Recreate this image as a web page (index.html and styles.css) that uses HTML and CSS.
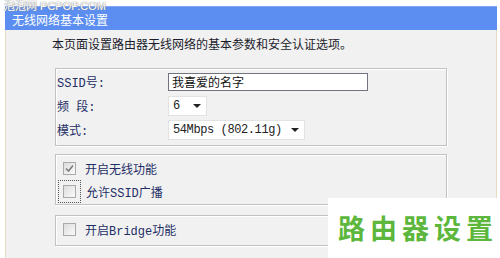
FILE: index.html
```html
<!DOCTYPE html>
<html lang="zh-CN">
<head>
    <meta charset="UTF-8">
    <title>无线网络基本设置</title>
    <link rel="stylesheet" href="styles.css">
</head>
<body>
    <!-- Site watermark over the top-left corner -->
    <div class="watermark">泡泡网 PCPOP.COM</div>

    <div class="page">
        <div class="title-bar"><span class="title-text">无线网络基本设置</span></div>

        <div class="panel">
            <p class="desc">本页面设置路由器无线网络的基本参数和安全认证选项。</p>

            <!-- Basic parameters -->
            <div class="group params">
                <div class="row">
                    <span class="label">SSID号:</span>
                    <span class="text-input">我喜爱的名字</span>
                </div>
                <div class="row">
                    <span class="label">频 段:</span>
                    <span class="select select-channel">6<span class="arrow"></span></span>
                </div>
                <div class="row">
                    <span class="label">模式:</span>
                    <span class="select select-mode">54Mbps (802.11g)<span class="arrow"></span></span>
                </div>
            </div>

            <!-- Wireless switches -->
            <div class="group checks">
                <div class="check-row">
                    <span class="checkbox checked">
                        <svg width="9" height="9" viewBox="0 0 9 9"><path d="M1 4.5 L3.5 7 L8 1.5" fill="none" stroke="#7d7d7d" stroke-width="1.6"/></svg>
                    </span>
                    <span class="check-label">开启无线功能</span>
                </div>
                <div class="check-row">
                    <span class="focus-ring"><span class="checkbox"></span></span>
                    <span class="check-label">允许SSID广播</span>
                </div>
            </div>

            <div class="group checks bridge">
                <div class="check-row">
                    <span class="checkbox"></span>
                    <span class="check-label">开启Bridge功能</span>
                </div>
            </div>
        </div>
    </div>

    <!-- Caption stamped over the bottom-right corner -->
    <div class="caption">路由器设置</div>
</body>
</html>
```

FILE: styles.css
```css
/* General styling */
body {
    margin: 0;
    background-color: #ffffff;
    font-family: "Liberation Mono", "Noto Sans CJK SC", monospace;
    font-size: 12px;
    color: #1f2f66;
    height: 258px;
    overflow: hidden;
}

.page {
    margin: 0 3px 0 5px;
    padding-top: 6px;
    height: 252px;
    display: flex;
    flex-direction: column;
}

.title-bar {
    height: 24px;
    padding-left: 7px;
    background-color: #5b8ef0;
    border-top: 1px solid #7fa6f4;
    box-sizing: border-box;
    display: flex;
    align-items: center;
    color: #ffffff;
    font-family: "Noto Sans CJK SC", sans-serif;
}

.title-text {
    line-height: 12px;
    margin-top: 2px;
}

.panel {
    flex: 1;
    background-color: #f1f1f1;
    border-left: 1px solid #e6dcc2;
    border-right: 1px solid #e6dcc2;
    padding: 6px 0 0 49px;
}

.desc {
    margin: 0 0 0 -3px;
    line-height: 16px;
    color: #1c1c2c;
    font-family: "Noto Sans CJK SC", sans-serif;
}

/* Framed groups */
.group {
    width: 390px;
    border: 1px solid #c2c2c2;
    box-shadow: inset 1px 1px 0 #ffffff, 1px 1px 0 #ffffff;
    box-sizing: content-box;
}

.params {
    margin-top: 16px;
    padding: 1px 0 3px 1px;
    width: 389px;
}

.row {
    height: 24px;
    display: flex;
    align-items: center;
}

.label {
    width: 111px;
}

.text-input {
    width: 195px;
    height: 16px;
    line-height: 16px;
    padding-left: 3px;
    background-color: #ffffff;
    border: 1px solid #6f7480;
    color: #111111;
    font-family: "Noto Sans CJK SC", sans-serif;
}

.select {
    height: 18px;
    line-height: 18px;
    padding-left: 4px;
    background-color: #ffffff;
    border: 1px solid #e2e2e2;
    color: #222222;
    display: flex;
    align-items: center;
    letter-spacing: -0.4px;
}

.select-channel {
    width: 33px;
}

.select-mode {
    width: 131px;
}

.arrow {
    margin-left: auto;
    margin-right: 5px;
    width: 0;
    height: 0;
    border-left: 4px solid transparent;
    border-right: 4px solid transparent;
    border-top: 4px solid #222222;
}

/* Checkbox rows */
.checks {
    margin-top: 8px;
    padding: 2px 0 1px 7px;
    width: 383px;
}

.bridge {
    margin-top: 10px;
    padding-bottom: 4px;
}

.check-row {
    height: 23px;
    display: flex;
    align-items: center;
}

.checkbox {
    width: 11px;
    height: 11px;
    border: 1px solid #a9a9a9;
    background: linear-gradient(135deg, #dcdcdc, #fbfbfb);
    display: flex;
    align-items: center;
    justify-content: center;
    flex-shrink: 0;
}

.focus-ring {
    margin: 0 -4px 0 -5px;
    padding: 4px;
    border: 1px dotted #555555;
    display: flex;
}

.check-label {
    margin-left: 9px;
}

/* Overlays */
.watermark {
    position: absolute;
    top: 0;
    left: 4px;
    font-family: "Liberation Sans", "Noto Sans CJK SC", sans-serif;
    font-size: 11px;
    line-height: 12px;
    color: #ffffff;
    text-shadow: 0 0 1px #8a8a8a, 0 0 1px #8a8a8a;
}

.caption {
    position: absolute;
    left: 328px;
    top: 198px;
    right: 0;
    bottom: 0;
    background-color: #ffffff;
    padding-left: 10px;
    font-family: "Noto Sans CJK SC", sans-serif;
    font-weight: bold;
    font-size: 27px;
    line-height: 60px;
    letter-spacing: 5px;
    color: #5cb73c;
}
```
